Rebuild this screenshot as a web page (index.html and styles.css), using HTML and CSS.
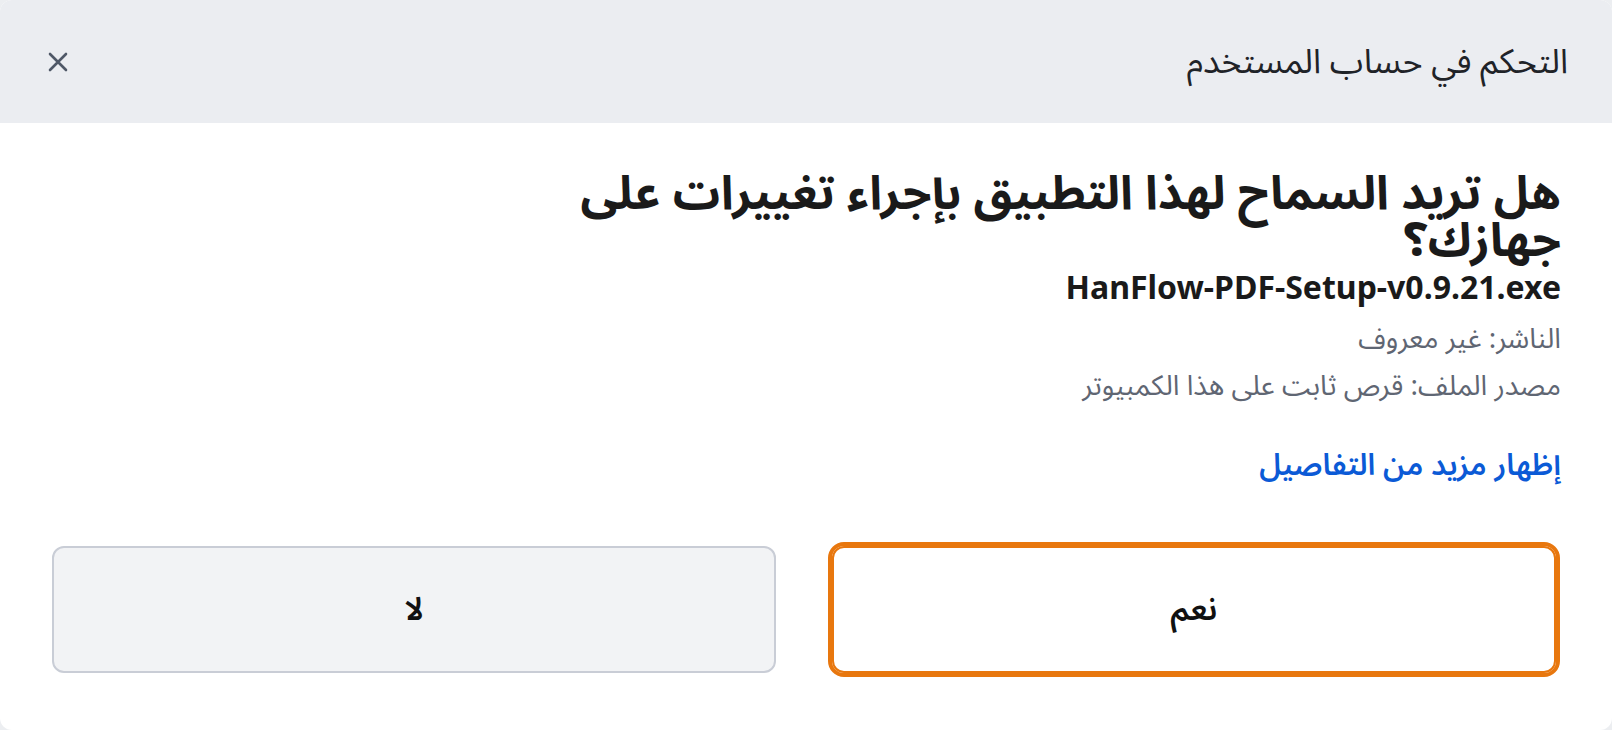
FILE: index.html
```html
<!DOCTYPE html>
<html lang="ar" dir="rtl">
  <head>
    <meta charset="UTF-8" />
    <meta name="viewport" content="width=device-width, initial-scale=1.0" />
    <title>التحكم في حساب المستخدم</title>
    <link rel="stylesheet" href="styles.css">
  </head>
  <body>
    <div class="uac-dialog">
      <div class="dialog-header">
        <div class="dialog-title">التحكم في حساب المستخدم</div>
        <button class="close-btn" aria-label="إغلاق">
          <svg width="20" height="20" viewBox="0 0 20 20">
            <path d="M2 2 L18 18 M18 2 L2 18" stroke="#4f5867" stroke-width="2.6" stroke-linecap="round" />
          </svg>
        </button>
      </div>

      <div class="dialog-body">
        <h1 class="question">هل تريد السماح لهذا التطبيق بإجراء تغييرات على جهازك؟</h1>
        <div class="file-name" dir="ltr">HanFlow-PDF-Setup-v0.9.21.exe</div>
        <div class="meta">
          <div class="meta-line">الناشر: غير معروف</div>
          <div class="meta-line">مصدر الملف: قرص ثابت على هذا الكمبيوتر</div>
        </div>
        <a class="more-link" href="#">إظهار مزيد من التفاصيل</a>

        <div class="action-buttons">
          <button class="action-btn primary">نعم</button>
          <button class="action-btn">لا</button>
        </div>
      </div>
    </div>
  </body>
</html>
```

FILE: styles.css
```css
* {
  margin: 0;
  padding: 0;
  box-sizing: border-box;
  font-family: "Noto Sans Arabic", "Noto Sans", sans-serif;
}

body {
  height: 100vh;
  overflow: hidden;
  background-color: #eceef1;
}

.uac-dialog {
  height: 100vh;
  background-color: #fff;
  border-radius: 12px;
  overflow: hidden;
  display: flex;
  flex-direction: column;
}

.dialog-header {
  height: 123px;
  flex-shrink: 0;
  background-color: #ebedf1;
  display: flex;
  align-items: center;
  justify-content: space-between;
  padding: 0 44px;
}

.dialog-title {
  font-size: 34px;
  line-height: 44px;
  color: #1f2328;
}

.close-btn {
  width: 28px;
  height: 28px;
  border: none;
  background: none;
  display: flex;
  justify-content: center;
  align-items: center;
  cursor: pointer;
}

.dialog-body {
  flex: 1;
  padding: 48px 51px 0 52px;
  display: flex;
  flex-direction: column;
}

.question {
  font-size: 47px;
  font-weight: 700;
  line-height: 47px;
  color: #1a1a1a;
  max-width: 1040px;
}

.file-name {
  margin-top: 2px;
  font-family: "Noto Sans", sans-serif;
  font-size: 32px;
  font-weight: 700;
  line-height: 40px;
  color: #1a1a1a;
  text-align: right;
}

.meta {
  margin-top: 9px;
  font-size: 28px;
  line-height: 47px;
  color: #5f6673;
}

.more-link {
  margin-top: 36px;
  font-size: 30px;
  font-weight: 600;
  line-height: 40px;
  color: #0b5ad6;
  text-decoration: none;
  align-self: flex-start;
}

.action-buttons {
  margin-top: 60px;
  margin-right: 5px;
  display: grid;
  grid-template-columns: 1fr 1fr;
  gap: 56px;
}

.action-btn {
  height: 127px;
  border: 2px solid #c9cdd6;
  border-radius: 12px;
  background-color: #f2f3f5;
  font-size: 32px;
  font-weight: 600;
  color: #111;
  cursor: pointer;
}

.action-btn.primary {
  background-color: #fff;
  border-color: #e8770e;
  outline: 4px solid #e8770e;
  border-radius: 12px;
}
```
